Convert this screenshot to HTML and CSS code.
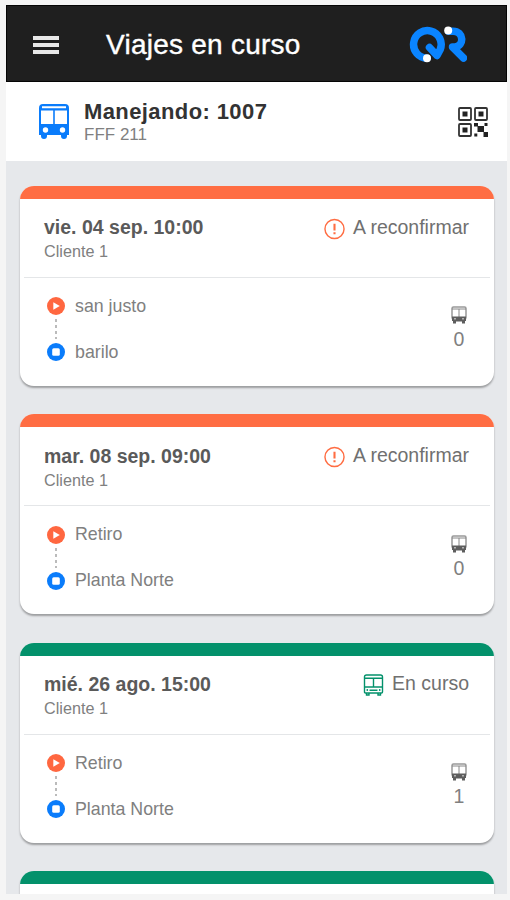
FILE: index.html
```html
<!DOCTYPE html>
<html lang="es">
<head>
  <meta charset="UTF-8" />
  <meta name="viewport" content="width=device-width, initial-scale=1" />
  <title>Viajes en curso</title>
  <link rel="stylesheet" href="styles.css">
</head>
<body>
  <!-- ICONOS -->
  <svg class="sprite" aria-hidden="true">
    <symbol id="bus" viewBox="0 0 30 35">
      <path fill-rule="evenodd" d="M4 0H26Q30 0 30 4V31H28V32Q28 35 25 35Q22 35 22 32V31H8V32Q8 35 5 35Q2 35 2 32V31H0V4Q0 0 4 0ZM3 2.3V4.3H27V2.3ZM2 6.5V20H14.2V6.5ZM15.8 6.5V20H28V6.5ZM6.5 23.3A2.7 2.7 0 1 0 6.5 28.7A2.7 2.7 0 1 0 6.5 23.3ZM23.5 23.3A2.7 2.7 0 1 0 23.5 28.7A2.7 2.7 0 1 0 23.5 23.3Z" fill="currentColor"/>
    </symbol>
    <symbol id="bus-small" viewBox="0 0 16 18">
      <rect x="1" y="1" width="14" height="12" rx="1.5" fill="none" stroke="#999" stroke-width="1.5"/>
      <path d="M1 3H15M8 3V11" stroke="#888" fill="none"/>
      <path fill-rule="evenodd" d="M1 10.5H15V15H14V17.5H11V15.5H5V17.5H2V15H1ZM3 12V13.5H5V12ZM11 12V13.5H13V12Z" fill="#5e5e5e"/>
    </symbol>
    <symbol id="bus-line" viewBox="0 0 20 22">
      <path d="M3 1H17Q19 1 19 3V18Q19 19 18 19H2Q1 19 1 18V3Q1 1 3 1ZM1 4.2H19M10 4.2V13M1 13H19M6 16.3H14M3 19V21H5.5V19M14.5 19V21H17V19" fill="none" stroke="currentColor" stroke-width="1.4"/>
      <circle cx="3.8" cy="16" r="0.9" fill="currentColor"/>
      <circle cx="16.2" cy="16" r="0.9" fill="currentColor"/>
    </symbol>
    <symbol id="alert" viewBox="0 0 22 22">
      <circle cx="11" cy="11" r="10" fill="none" stroke="currentColor" stroke-width="1.5"/>
      <path d="M11 5.5V12.5M11 14.3V16.4" fill="none" stroke="currentColor" stroke-width="2.2"/>
    </symbol>
    <symbol id="start" viewBox="0 0 18 18">
      <circle cx="9" cy="9" r="9" fill="#ff6740"/>
      <path d="M6.3 5.3L12.8 9L6.3 12.7Z" fill="#fff"/>
    </symbol>
    <symbol id="end" viewBox="0 0 18 18">
      <circle cx="9" cy="9" r="9" fill="#0a7cfb"/>
      <rect x="5.2" y="5.2" width="7.6" height="7.6" rx="1.5" fill="#fff"/>
    </symbol>
  </svg>

  <div class="app">
    <header class="topbar">
      <div class="menu"><span></span><span></span><span></span></div>
      <h1>Viajes en curso</h1>
      <svg class="logo" viewBox="0 0 58 38">
        <g fill="none" stroke="#0a84ff" stroke-width="7.5" stroke-linecap="round" stroke-linejoin="round">
          <path d="M18 32.2A13.8 13.8 0 1 1 31.2 23.5L28 29.5L20.5 21.5"/>
          <path d="M39.5 5.2H44C55 5.2 55.5 20 46 21H43.5L54.5 32"/>
        </g>
        <circle cx="18" cy="32.2" r="4" fill="#fff"/>
        <circle cx="39.2" cy="4.5" r="4" fill="#fff"/>
      </svg>
    </header>

    <section class="driver">
      <svg class="driver-bus"><use href="#bus"/></svg>
      <div class="driver-info">
        <h2>Manejando: 1007</h2>
        <p>FFF 211</p>
      </div>
      <svg class="qr" viewBox="0 0 30 30">
        <g fill="none" stroke="#333" stroke-width="1.8">
          <rect x="1" y="1" width="12" height="12" rx="1"/>
          <rect x="17" y="1" width="12" height="12" rx="1"/>
          <rect x="1" y="17" width="12" height="12" rx="1"/>
        </g>
        <path fill="#222" d="M4.5 4.5H9.5V9.5H4.5ZM20.5 4.5H25.5V9.5H20.5ZM4.5 20.5H9.5V25.5H4.5ZM16 16H20V19.5H16ZM26.5 16H29.5V19H26.5ZM19.5 19H26V25H19.5ZM16.3 26.5H19.3V29.5H16.3ZM25.5 25H30V30H25.5Z"/>
      </svg>
    </section>

    <main class="trips">
      <article class="card pending">
        <div class="card-head">
          <div>
            <h3>vie. 04 sep. 10:00</h3>
            <p class="client">Cliente 1</p>
          </div>
          <div class="status"><svg><use href="#alert"/></svg>A reconfirmar</div>
        </div>
        <div class="card-body">
          <div class="route">
            <div class="stop"><svg><use href="#start"/></svg>san justo</div>
            <div class="dots"></div>
            <div class="stop"><svg><use href="#end"/></svg>barilo</div>
          </div>
          <div class="count"><svg><use href="#bus-small"/></svg>0</div>
        </div>
      </article>

      <article class="card pending">
        <div class="card-head">
          <div>
            <h3>mar. 08 sep. 09:00</h3>
            <p class="client">Cliente 1</p>
          </div>
          <div class="status"><svg><use href="#alert"/></svg>A reconfirmar</div>
        </div>
        <div class="card-body">
          <div class="route">
            <div class="stop"><svg><use href="#start"/></svg>Retiro</div>
            <div class="dots"></div>
            <div class="stop"><svg><use href="#end"/></svg>Planta Norte</div>
          </div>
          <div class="count"><svg><use href="#bus-small"/></svg>0</div>
        </div>
      </article>

      <article class="card active">
        <div class="card-head">
          <div>
            <h3>mié. 26 ago. 15:00</h3>
            <p class="client">Cliente 1</p>
          </div>
          <div class="status"><svg><use href="#bus-line"/></svg>En curso</div>
        </div>
        <div class="card-body">
          <div class="route">
            <div class="stop"><svg><use href="#start"/></svg>Retiro</div>
            <div class="dots"></div>
            <div class="stop"><svg><use href="#end"/></svg>Planta Norte</div>
          </div>
          <div class="count"><svg><use href="#bus-small"/></svg>1</div>
        </div>
      </article>

      <article class="card active"></article>
    </main>
  </div>
</body>
</html>
```
FILE: styles.css
```css
:root {
  --naranja: #ff6d43;
  --verde: #03916b;
  --azul: #0a7cfb;
  --fondo: #e6e8eb;
}

* {
  box-sizing: border-box;
}

body {
  font-family: "Liberation Sans", Arial, sans-serif;
  margin: 0;
  padding: 5px 3px 6px 6px;
  height: 900px;
  background: #f5f5f5;
  overflow: hidden;
}

h1, h2, h3, p {
  margin: 0;
}

.sprite {
  display: none;
}

.app {
  height: 889px;
  overflow: hidden;
  background: var(--fondo);
}

.topbar {
  height: 77px;
  display: flex;
  align-items: center;
  padding: 2px 39px 0 26px;
  background: #1f1f1f;
  border: 1px solid #050505;
}

.menu {
  width: 26px;
  display: flex;
  flex-direction: column;
  gap: 3px;
}

.menu span {
  height: 4px;
  background: #e8e8e8;
}

.topbar h1 {
  margin-left: 47px;
  font-size: 28px;
  font-weight: normal;
  line-height: 32px;
  letter-spacing: 0.25px;
  color: #fff;
  -webkit-text-stroke: 0.4px #fff;
}

.logo {
  width: 58px;
  height: 38px;
  margin-left: auto;
}

.driver {
  height: 79px;
  display: flex;
  align-items: center;
  padding: 0 19px 0 33px;
  background: #fff;
}

.driver-bus {
  width: 30px;
  height: 35px;
  color: var(--azul);
}

.driver-info {
  margin-left: 15px;
}

.driver-info h2 {
  font-size: 22px;
  line-height: 25px;
  letter-spacing: 0.4px;
  color: #333;
}

.driver-info p {
  font-size: 17px;
  line-height: 21px;
  color: #808080;
}

.qr {
  width: 30px;
  height: 30px;
  margin-left: auto;
}

.trips {
  padding: 25px 13px 0 14px;
  display: flex;
  flex-direction: column;
  gap: 28.4px;
}

.card {
  height: 200px;
  flex-shrink: 0;
  overflow: hidden;
  border-radius: 14px;
  background: #fff;
  box-shadow: 0 2px 2px rgba(0, 0, 0, 0.32);
}

.card::before {
  content: "";
  display: block;
  height: 13px;
  background: var(--naranja);
}

.card.active::before {
  background: var(--verde);
}

.card-head {
  height: 79px;
  margin: 0 4px;
  padding: 16.2px 21px 0 20px;
  display: flex;
  justify-content: space-between;
  border-bottom: 1px solid #e4e6e8;
}

.card h3 {
  font-size: 19.5px;
  line-height: 24px;
  color: #5a5a5a;
}

.client {
  font-size: 16.2px;
  line-height: 24px;
  color: #808080;
}

.status {
  height: 24px;
  display: flex;
  align-items: center;
  gap: 8px;
  font-size: 19.5px;
  color: #707070;
}

.status svg {
  width: 21px;
  height: 22px;
  margin-top: 3px;
  color: var(--naranja);
}

.active .status svg {
  color: var(--verde);
}

.card-body {
  display: flex;
  justify-content: space-between;
  padding: 19.3px 27px 0;
}

.stop {
  height: 18px;
  display: flex;
  align-items: center;
  gap: 10px;
  font-size: 17.8px;
  color: #808080;
}

.stop svg {
  width: 18px;
  height: 18px;
}

.dots {
  height: 20px;
  margin: 4px 0 4px 8px;
  width: 2px;
  background: repeating-linear-gradient(#bbb 0 3px, transparent 3px 6px);
}

.count {
  display: flex;
  flex-direction: column;
  align-items: center;
  gap: 4px;
  padding-top: 9px;
  font-size: 19.5px;
  line-height: 22px;
  color: #808080;
}

.count svg {
  width: 16px;
  height: 18px;
}
```
